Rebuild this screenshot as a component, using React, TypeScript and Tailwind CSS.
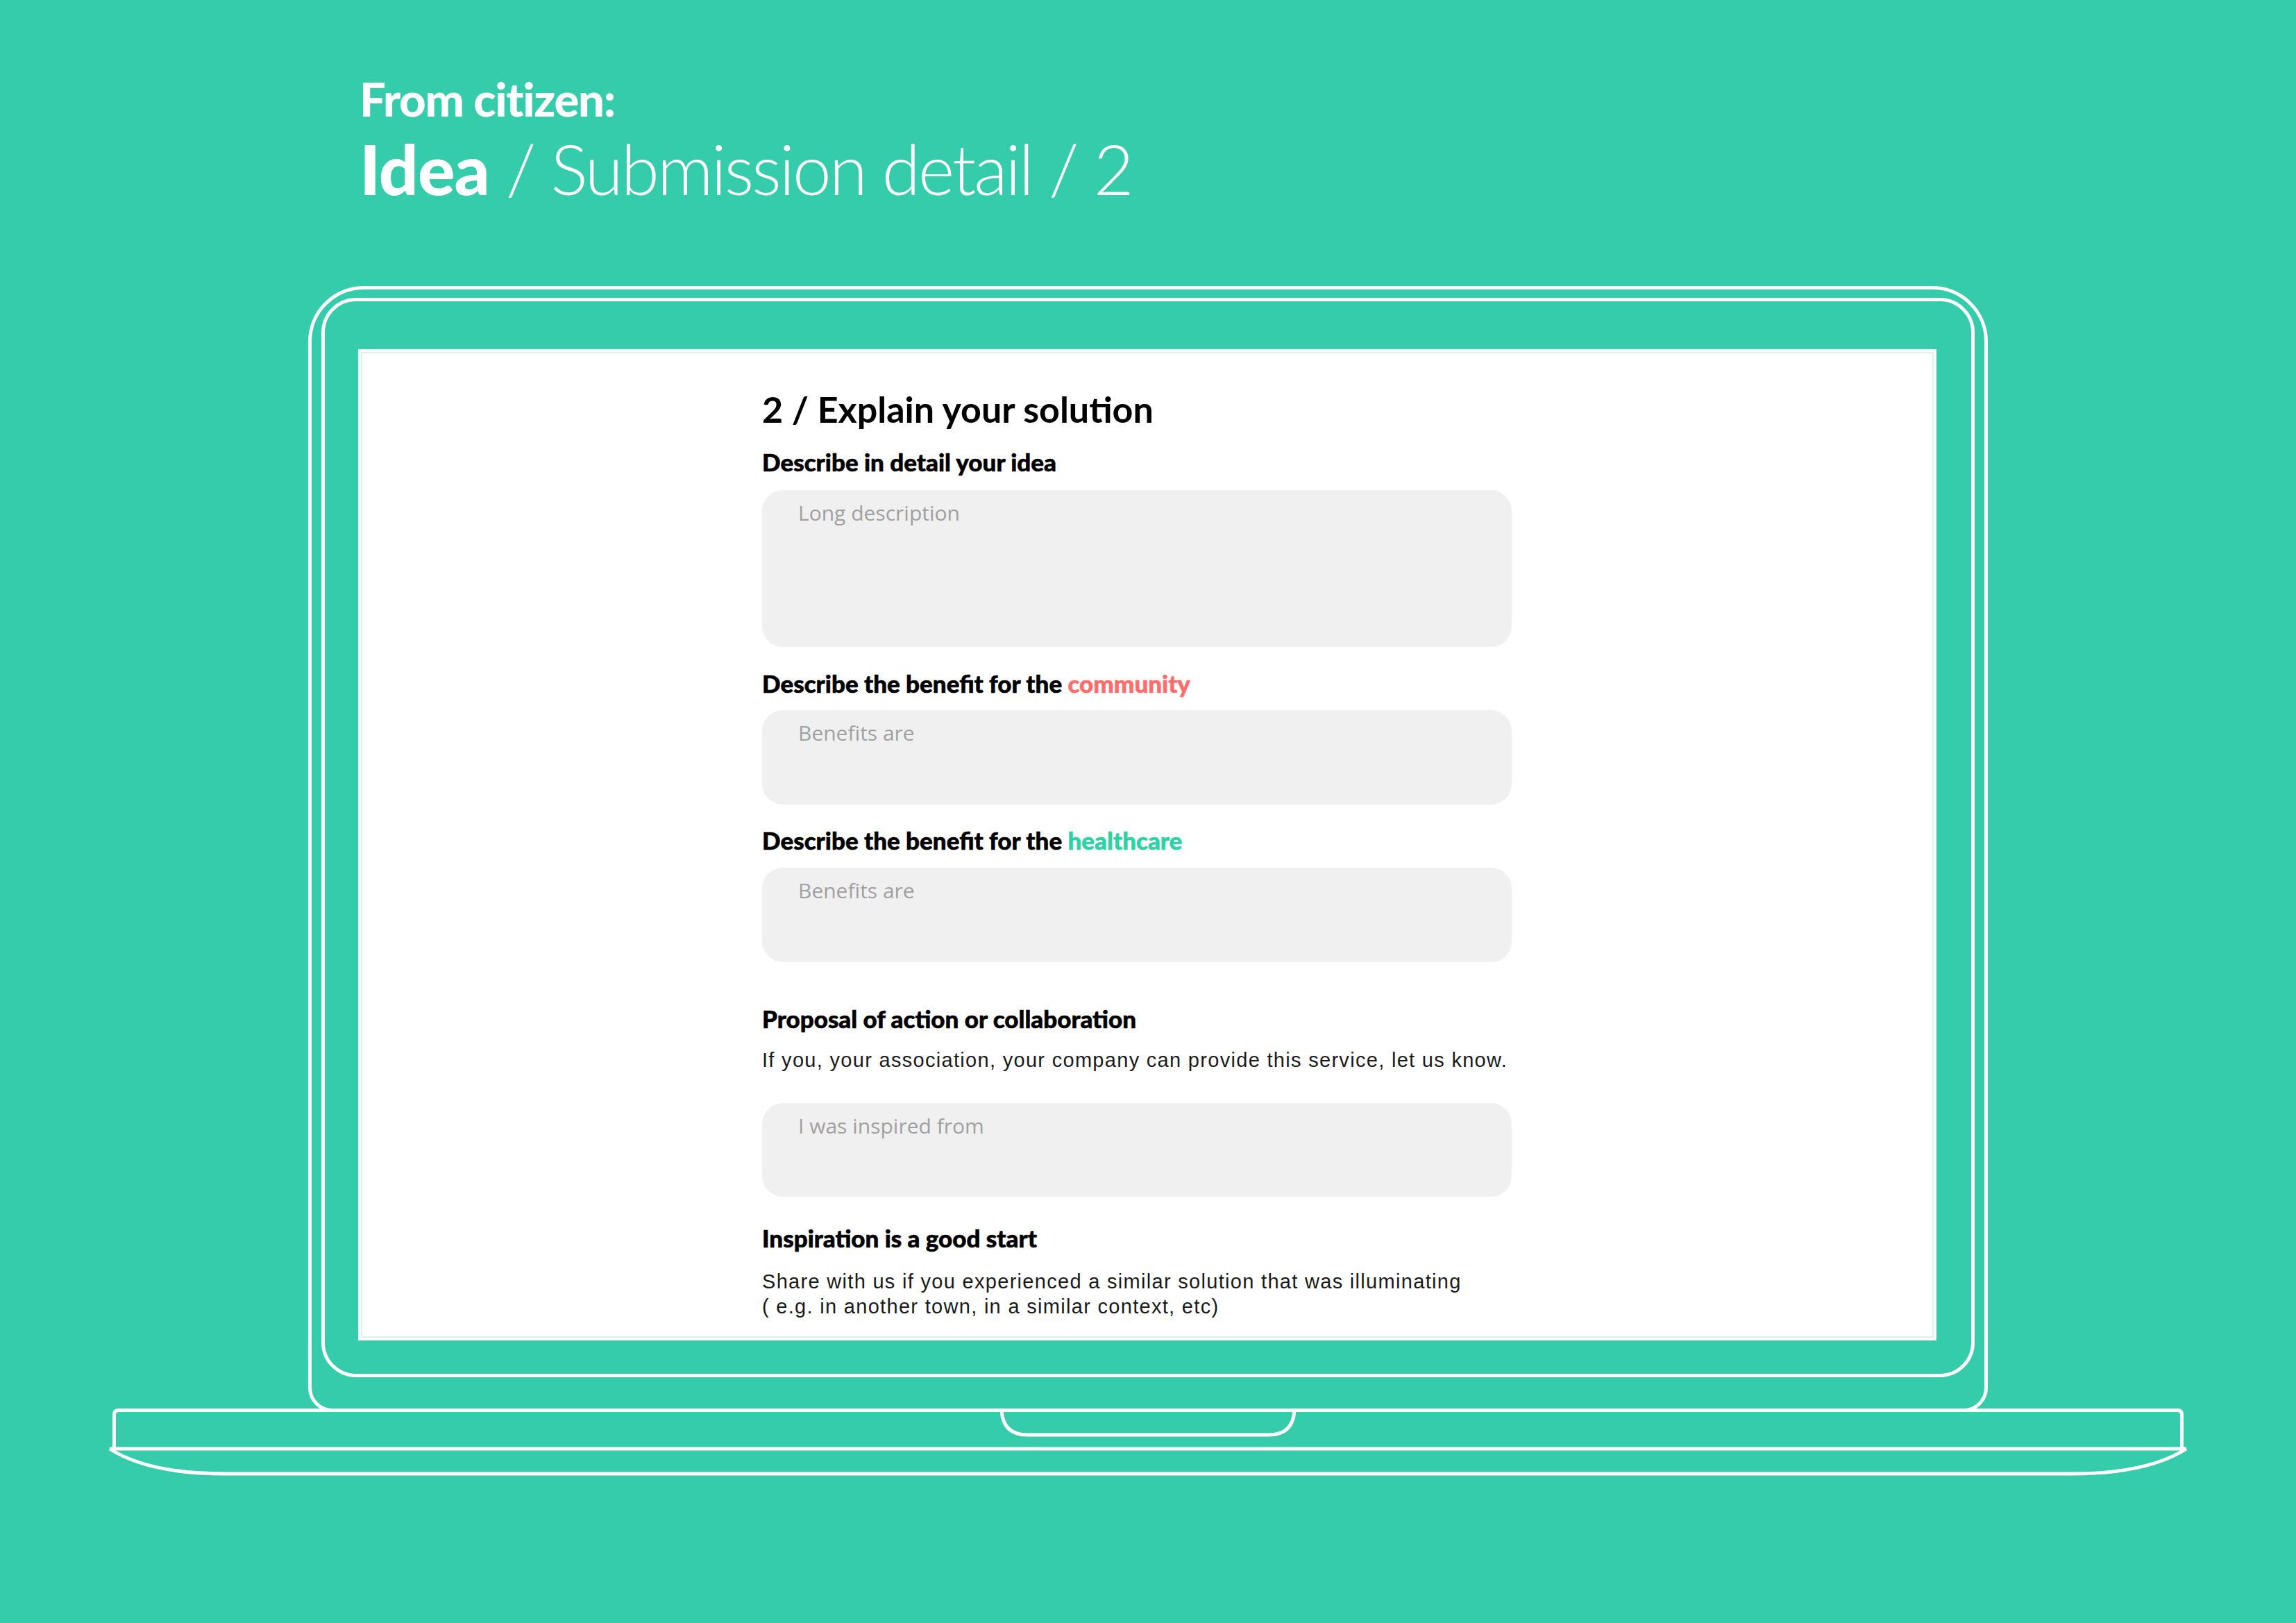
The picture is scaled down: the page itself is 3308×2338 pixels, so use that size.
import React from 'react';

function Box({ placeholder, h }: { placeholder: string; h: string }) {
  return (
    <textarea
      readOnly
      placeholder={placeholder}
      className={`block w-[1080px] ${h} resize-none rounded-[30px] bg-[#f0f0f0] pl-[52px] pt-[18px] font-['Open_Sans',sans-serif] text-[30px] leading-none text-[#333] placeholder:text-[#a0a0a0] outline-none`}
    />
  );
}

function Label({ children, mt }: { children: React.ReactNode; mt: string }) {
  return <p className={`${mt} text-[35px] leading-none font-black [-webkit-text-stroke-width:0.6px]`}>{children}</p>;
}

export default function App() {
  return (
    <div className="w-[3308px] h-[2338px] overflow-hidden bg-[#34ccab] font-['Lato',sans-serif] text-white">
      {/* page heading */}
      <header className="pl-[518px] pt-[109px]">
        <p className="text-[67px] leading-none font-black tracking-[-0.02em]">From citizen:</p>
        <h1 className="mt-[16px] text-[100px] leading-none font-light tracking-[-0.03em]">
          <span className="font-black tracking-[-0.01em]">Idea</span> / Submission detail / 2
        </h1>
      </header>

      {/* laptop */}
      <div className="mt-[120px] flex flex-col items-center">
        <div className="w-[2420px] h-[1622px] rounded-t-[80px] rounded-b-[35px] border-[5px] border-white pt-[12px] pb-[45px]">
          <div className="mx-auto w-[2382px] h-[1555px] rounded-[50px] border-[5px] border-white pt-[69px]">
            <div className="ml-[48px] w-[2274px] h-[1428px] bg-white shadow-[inset_0_0_0_4px_#fff,inset_0_0_0_6px_#dcf3ed] pl-[582px] pt-[60px] text-black">
              <h2 className="text-[52px] leading-none font-bold">2 / Explain your solution</h2>

              <Label mt="mt-[33px]">Describe in detail your idea</Label>
              <div className="mt-[23px]">
                <Box placeholder="Long description" h="h-[226px]" />
              </div>

              <Label mt="mt-[35px]">
                Describe the benefit for the <span className="text-[#ff6d6d]">community</span>
              </Label>
              <div className="mt-[21px]">
                <Box placeholder="Benefits are" h="h-[136px]" />
              </div>

              <Label mt="mt-[34px]">
                Describe the benefit for the <span className="text-[#2dd3a6]">healthcare</span>
              </Label>
              <div className="mt-[22px]">
                <Box placeholder="Benefits are" h="h-[136px]" />
              </div>

              <Label mt="mt-[64px]">Proposal of action or collaboration</Label>
              <p className="mt-[28px] font-['Liberation_Sans',Arial,sans-serif] text-[29px] leading-none tracking-[0.045em] text-[#1a1a1a]">
                If you, your association, your company can provide this service, let us know.
              </p>
              <div className="mt-[47px]">
                <Box placeholder="I was inspired from" h="h-[135px]" />
              </div>

              <Label mt="mt-[42px]">Inspiration is a good start</Label>
              <p className="mt-[27px] font-['Liberation_Sans',Arial,sans-serif] text-[29px] leading-[36px] tracking-[0.045em] text-[#1a1a1a]">
                Share with us if you experienced a similar solution that was illuminating
                <br />( e.g. in another town, in a similar context, etc)
              </p>
            </div>
          </div>
        </div>

        {/* base of the laptop */}
        <svg className="-mt-[5px] block" width="3016" height="100" viewBox="0 0 3016 100" fill="none" stroke="#fff" strokeWidth="5">
          <path d="M18.5 58 L18.5 9 Q18.5 2.5 25 2.5 L2991 2.5 Q2997.5 2.5 2997.5 9 L2997.5 58" />
          <path d="M12 58 L3004 58" />
          <path d="M12 58 Q68 94 178 94 L2838 94 Q2948 94 3004 58" />
          <path d="M1297 2.5 Q1299 38 1334 38 L1682 38 Q1717 38 1719 2.5" />
        </svg>
      </div>
    </div>
  );
}
